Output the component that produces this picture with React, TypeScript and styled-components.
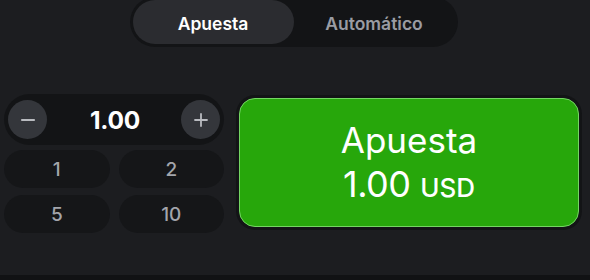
import styled, { createGlobalStyle } from 'styled-components'

const GlobalStyle = createGlobalStyle`
  html, body {
    margin: 0;
    padding: 0;
    background: #111214;
  }
  body {
    font-family: Inter, 'Noto Sans', sans-serif;
  }
`

const quickAmounts = ['1', '2', '5', '10']

export default function App() {
  return (
    <>
      <GlobalStyle />
      <Panel>
        <Tabs>
          <Tab active>Apuesta</Tab>
          <Tab>Automático</Tab>
        </Tabs>

        <BetRow>
          <LeftColumn>
            <Stepper>
              <RoundButton aria-label="minus">
                <svg width="16" height="16" viewBox="0 0 16 16">
                  <path d="M2 8h12" stroke="#b9bbc0" strokeWidth="2.2" strokeLinecap="round" />
                </svg>
              </RoundButton>
              <Amount>1.00</Amount>
              <RoundButton aria-label="plus">
                <svg width="16" height="16" viewBox="0 0 16 16">
                  <path d="M2 8h12M8 2v12" stroke="#b9bbc0" strokeWidth="1.8" strokeLinecap="round" />
                </svg>
              </RoundButton>
            </Stepper>
            <QuickGrid>
              {quickAmounts.map((v) => (
                <QuickButton key={v}>{v}</QuickButton>
              ))}
            </QuickGrid>
          </LeftColumn>

          <BetFrame>
            <BetButton>
              <BetLabel>Apuesta</BetLabel>
              <BetAmount>
                1.00 <Currency>USD</Currency>
              </BetAmount>
            </BetButton>
          </BetFrame>
        </BetRow>
      </Panel>
      <Footer />
    </>
  )
}

const Panel = styled.div`
  height: 275px;
  background: #1c1d20;
  display: flex;
  flex-direction: column;
  align-items: center;
  overflow: hidden;
`

const Tabs = styled.div`
  margin-top: -3px;
  margin-left: -3px;
  display: flex;
  padding: 3px;
  height: 50px;
  box-sizing: border-box;
  border-radius: 25px;
  background: #131416;
`

const Tab = styled.div<{ active?: boolean }>`
  width: 161px;
  display: flex;
  align-items: center;
  justify-content: center;
  padding-top: 3px;
  box-sizing: border-box;
  border-radius: 22px;
  font-size: 17.5px;
  font-weight: 600;
  color: ${(p) => (p.active ? '#ffffff' : '#9a9ca3')};
  background: ${(p) => (p.active ? '#2b2c30' : 'transparent')};
`

const BetRow = styled.div`
  align-self: stretch;
  display: flex;
  gap: 12px;
  padding: 0 8px 0 4px;
  margin-top: 47px;
`

const LeftColumn = styled.div`
  width: 220px;
  display: flex;
  flex-direction: column;
  gap: 5px;
`

const Stepper = styled.div`
  height: 51px;
  box-sizing: border-box;
  padding: 0 4px;
  display: flex;
  align-items: center;
  justify-content: space-between;
  border-radius: 26px;
  background: #131416;
`

const RoundButton = styled.button`
  width: 39px;
  height: 39px;
  border: none;
  padding: 0;
  border-radius: 50%;
  background: #34363b;
  display: flex;
  align-items: center;
  justify-content: center;
`

const Amount = styled.span`
  font-size: 24.5px;
  font-weight: 700;
  color: #ffffff;
  letter-spacing: -0.3px;
  margin-left: 2px;
`

const QuickGrid = styled.div`
  display: grid;
  grid-template-columns: 1fr 1fr;
  column-gap: 9px;
  row-gap: 7px;
`

const QuickButton = styled.button`
  height: 38px;
  border: none;
  border-radius: 19px;
  background: #151618;
  color: #a3a5ab;
  font-family: Inter, 'Noto Sans', sans-serif;
  font-size: 19px;
  font-weight: 500;
`

const BetFrame = styled.div`
  flex: 1;
  height: 135px;
  box-sizing: border-box;
  margin-top: 1px;
  padding: 3px;
  border-radius: 19px;
  background: #131416;
`

const BetButton = styled.div`
  height: 100%;
  box-sizing: border-box;
  border: 1.5px solid #74d663;
  border-radius: 16px;
  background: #27a70b;
  display: flex;
  flex-direction: column;
  align-items: center;
  justify-content: center;
  gap: 4px;
  padding-top: 2px;
  color: #ffffff;
`

const BetLabel = styled.div`
  font-size: 35px;
  font-weight: 400;
  line-height: 40px;
`

const BetAmount = styled.div`
  font-size: 36px;
  font-weight: 400;
  line-height: 40px;
  letter-spacing: -0.5px;
`

const Currency = styled.span`
  font-size: 26px;
  font-weight: 500;
  letter-spacing: 0;
`

const Footer = styled.div`
  height: 5px;
  background: #111214;
`
